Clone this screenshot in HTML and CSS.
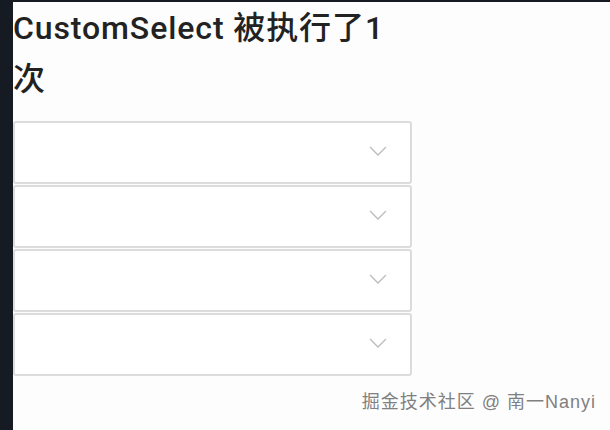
FILE: index.html
```html
<!DOCTYPE html>
<html lang="zh-CN">
<head>
<meta charset="utf-8">
<title>CustomSelect</title>
<link rel="stylesheet" href="styles.css">
</head>
<body>
<div class="frame">
  <div class="topbar"></div>
  <div class="main">
    <div class="side"></div>
    <div class="content">
      <h1 class="title">CustomSelect 被执行了1次</h1>
      <div class="select-list">
        <div class="select">
          <svg class="chevron" width="18" height="10" viewBox="0 0 18 10"><path d="M1 1 L9 9 L17 1" fill="none" stroke="#bdbdbd" stroke-width="1.4"/></svg>
        </div>
        <div class="select">
          <svg class="chevron" width="18" height="10" viewBox="0 0 18 10"><path d="M1 1 L9 9 L17 1" fill="none" stroke="#bdbdbd" stroke-width="1.4"/></svg>
        </div>
        <div class="select">
          <svg class="chevron" width="18" height="10" viewBox="0 0 18 10"><path d="M1 1 L9 9 L17 1" fill="none" stroke="#bdbdbd" stroke-width="1.4"/></svg>
        </div>
        <div class="select">
          <svg class="chevron" width="18" height="10" viewBox="0 0 18 10"><path d="M1 1 L9 9 L17 1" fill="none" stroke="#bdbdbd" stroke-width="1.4"/></svg>
        </div>
      </div>
      <div class="watermark">掘金技术社区 @ 南一Nanyi</div>
    </div>
  </div>
</div>
</body>
</html>
```
FILE: styles.css
```css
html, body {
  margin: 0;
  padding: 0;
  width: 610px;
  height: 430px;
  overflow: hidden;
  background: #fdfdfd;
}
.frame {
  display: flex;
  flex-direction: column;
  height: 430px;
}
.topbar {
  height: 2px;
  background: #161b23;
  flex: none;
}
.main {
  flex: 1;
  display: flex;
}
.side {
  width: 13px;
  background: #161b23;
  flex: none;
}
.content {
  flex: 1;
  position: relative;
  background: #fdfdfd;
}
.title {
  margin: 0 0 16px 0;
  padding-top: 1px;
  max-width: 388px;
  font-family: Roboto, "Noto Sans CJK SC", sans-serif;
  font-size: 32px;
  line-height: 51px;
  font-weight: 500;
  letter-spacing: 0.9px;
  color: #222;
}
.select-list {
  display: flex;
  flex-direction: column;
  gap: 1px;
  width: 399px;
}
.select {
  box-sizing: border-box;
  height: 63px;
  border: 2px solid #dcdcdc;
  border-radius: 3px;
  background: #fff;
  display: flex;
  align-items: center;
  justify-content: flex-end;
  padding-right: 23px;
}
.chevron {
  display: block;
  margin-bottom: 4px;
}
.watermark {
  position: absolute;
  right: 14px;
  bottom: 17px;
  font-family: "Liberation Sans", "Noto Sans CJK SC", sans-serif;
  font-size: 18px;
  line-height: 22px;
  letter-spacing: 1px;
  color: #808080;
  text-shadow: 0 0 1px #fff, 0 0 1px #fff;
}
```
